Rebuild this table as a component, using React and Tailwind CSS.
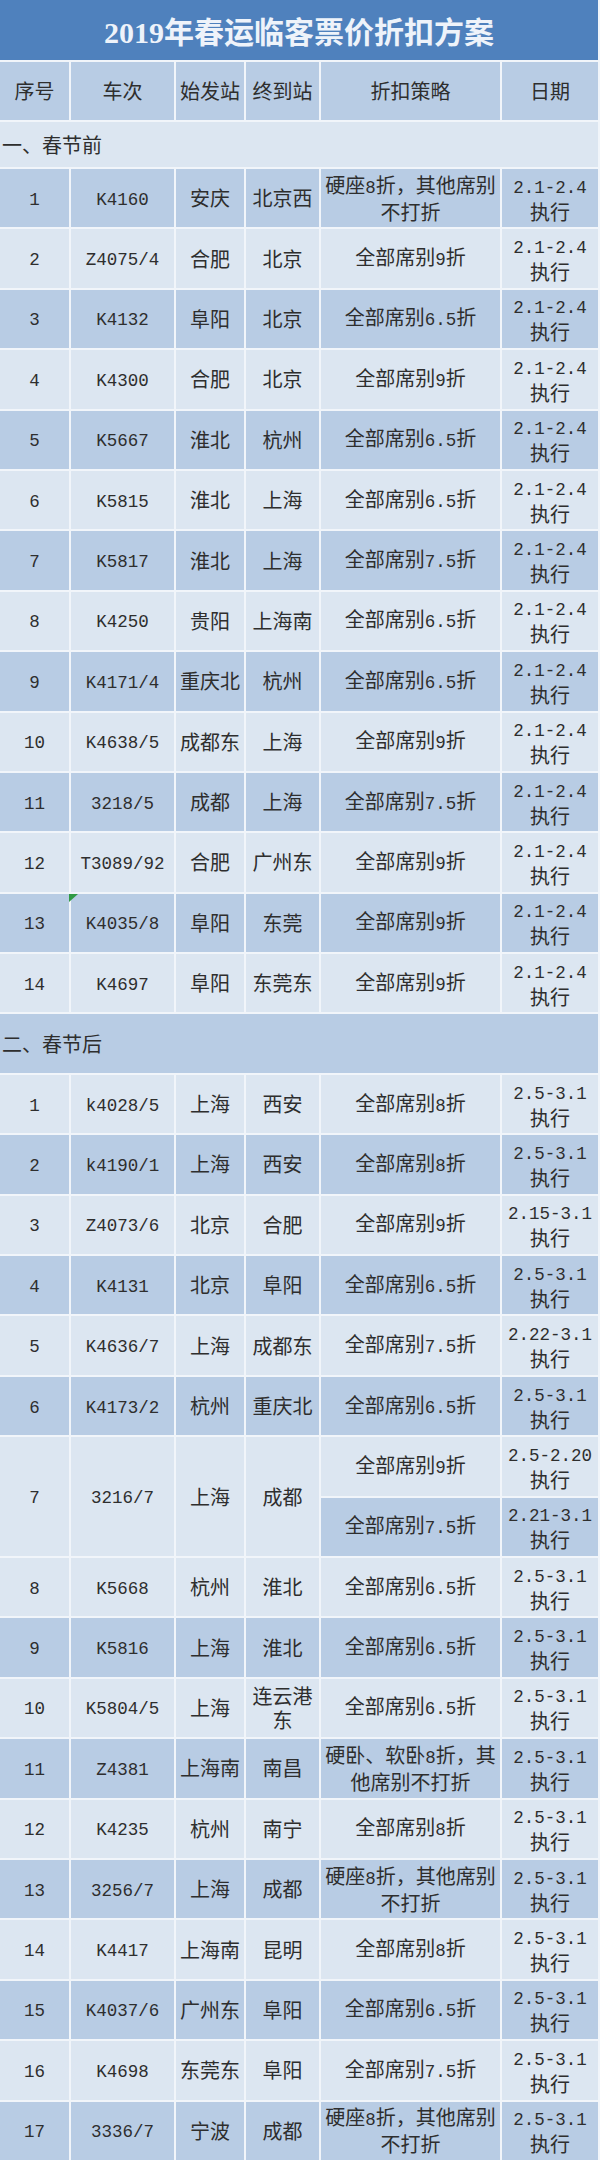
import React from "react";

const DARK = "bg-[#b8cce4]";
const LIGHT = "bg-[#dce6f1]";

function Txt({ s }) {
  const lines = s.split("|");
  return (
    <div className="flex flex-col items-center">
      {lines.map((line, i) => (
        <div key={i} className="whitespace-nowrap">
          {line
            .split(/([\x00-\x7f]+)/)
            .filter(Boolean)
            .map((p, j) =>
              /^[\x00-\x7f]+$/.test(p) ? (
                <span key={j} className="font-['Liberation_Mono',monospace] text-[17.5px]">
                  {p}
                </span>
              ) : (
                <span key={j}>{p}</span>
              )
            )}
        </div>
      ))}
    </div>
  );
}

function Cell({ bg, s, className = "", children }) {
  return (
    <div
      className={`${bg} relative flex items-center justify-center text-center text-[20px] leading-[24px] text-[#2e2e2e] ${className}`}
    >
      {s !== undefined ? <Txt s={s} /> : null}
      {children}
    </div>
  );
}

const sec1 = [
  ["1", "K4160", "安庆", "北京西", "硬座8折，其他席别|不打折"],
  ["2", "Z4075/4", "合肥", "北京", "全部席别9折"],
  ["3", "K4132", "阜阳", "北京", "全部席别6.5折"],
  ["4", "K4300", "合肥", "北京", "全部席别9折"],
  ["5", "K5667", "淮北", "杭州", "全部席别6.5折"],
  ["6", "K5815", "淮北", "上海", "全部席别6.5折"],
  ["7", "K5817", "淮北", "上海", "全部席别7.5折"],
  ["8", "K4250", "贵阳", "上海南", "全部席别6.5折"],
  ["9", "K4171/4", "重庆北", "杭州", "全部席别6.5折"],
  ["10", "K4638/5", "成都东", "上海", "全部席别9折"],
  ["11", "3218/5", "成都", "上海", "全部席别7.5折"],
  ["12", "T3089/92", "合肥", "广州东", "全部席别9折"],
  ["13", "K4035/8", "阜阳", "东莞", "全部席别9折"],
  ["14", "K4697", "阜阳", "东莞东", "全部席别9折"],
];

const sec2 = [
  ["1", "k4028/5", "上海", "西安", "全部席别8折", "2.5-3.1|执行"],
  ["2", "k4190/1", "上海", "西安", "全部席别8折", "2.5-3.1|执行"],
  ["3", "Z4073/6", "北京", "合肥", "全部席别9折", "2.15-3.1|执行"],
  ["4", "K4131", "北京", "阜阳", "全部席别6.5折", "2.5-3.1|执行"],
  ["5", "K4636/7", "上海", "成都东", "全部席别7.5折", "2.22-3.1|执行"],
  ["6", "K4173/2", "杭州", "重庆北", "全部席别6.5折", "2.5-3.1|执行"],
  ["7", "3216/7", "上海", "成都", null, null],
  ["8", "K5668", "杭州", "淮北", "全部席别6.5折", "2.5-3.1|执行"],
  ["9", "K5816", "上海", "淮北", "全部席别6.5折", "2.5-3.1|执行"],
  ["10", "K5804/5", "上海", "连云港|东", "全部席别6.5折", "2.5-3.1|执行"],
  ["11", "Z4381", "上海南", "南昌", "硬卧、软卧8折，其|他席别不打折", "2.5-3.1|执行"],
  ["12", "K4235", "杭州", "南宁", "全部席别8折", "2.5-3.1|执行"],
  ["13", "3256/7", "上海", "成都", "硬座8折，其他席别|不打折", "2.5-3.1|执行"],
  ["14", "K4417", "上海南", "昆明", "全部席别8折", "2.5-3.1|执行"],
  ["15", "K4037/6", "广州东", "阜阳", "全部席别6.5折", "2.5-3.1|执行"],
  ["16", "K4698", "东莞东", "阜阳", "全部席别7.5折", "2.5-3.1|执行"],
  ["17", "3336/7", "宁波", "成都", "硬座8折，其他席别|不打折", "2.5-3.1|执行"],
];

export default function App() {
  const cells = [];

  // header
  ["序号", "车次", "始发站", "终到站", "折扣策略", "日期"].forEach((h, i) =>
    cells.push(<Cell key={"h" + i} bg={DARK} s={h} className="h-[58px]" />)
  );

  cells.push(
    <Cell key="s1" bg={LIGHT} className="col-span-6 h-[45px] !justify-start pl-[2px]">
      <Txt s="一、春节前" />
    </Cell>
  );

  sec1.forEach((r, idx) => {
    const bg = idx % 2 === 0 ? DARK : LIGHT;
    r.forEach((c, j) =>
      cells.push(
        <Cell key={`a${idx}-${j}`} bg={bg} s={c} className="h-[58.4px]">
          {idx === 12 && j === 1 ? (
            <svg
              className="absolute left-[-2px] top-0"
              width="9"
              height="8"
              viewBox="0 0 9 8"
            >
              <polygon points="0,0 9,0 0,8" fill="#2f9a44" />
            </svg>
          ) : null}
        </Cell>
      )
    );
    cells.push(<Cell key={`a${idx}-d`} bg={bg} s="2.1-2.4|执行" className="h-[58.4px]" />);
  });

  cells.push(
    <Cell key="s2" bg={DARK} className="col-span-6 h-[58.4px] !justify-start pl-[2px]">
      <Txt s="二、春节后" />
    </Cell>
  );

  let unit = 0;
  sec2.forEach((r, idx) => {
    const bg = unit % 2 === 0 ? LIGHT : DARK;
    if (r[4] === null) {
      for (let j = 0; j < 4; j++) {
        cells.push(<Cell key={`b${idx}-${j}`} bg={bg} s={r[j]} className="row-span-2" />);
      }
      cells.push(<Cell key={`b${idx}-4a`} bg={LIGHT} s="全部席别9折" className="h-[58.4px]" />);
      cells.push(<Cell key={`b${idx}-5a`} bg={LIGHT} s="2.5-2.20|执行" className="h-[58.4px]" />);
      cells.push(<Cell key={`b${idx}-4b`} bg={DARK} s="全部席别7.5折" className="h-[58.4px]" />);
      cells.push(<Cell key={`b${idx}-5b`} bg={DARK} s="2.21-3.1|执行" className="h-[58.4px]" />);
      unit += 2;
    } else {
      r.forEach((c, j) =>
        cells.push(<Cell key={`b${idx}-${j}`} bg={bg} s={c} className="h-[58.4px]" />)
      );
      unit += 1;
    }
  });

  return (
    <div className="w-[600px] bg-white font-['Noto_Sans_CJK_SC',sans-serif]">
      <div className="grid grid-cols-[69px_103px_68px_73px_179px_96px] gap-[2px] bg-[#f1f5fa] pr-[2px]">
        <div className="col-span-6 flex h-[60px] items-center justify-center bg-[#4f81bd] pt-[4px] font-['Liberation_Serif','Noto_Sans_CJK_SC',serif] text-[30px] font-bold text-[#eef3fa]">
          2019年春运临客票价折扣方案
        </div>
        {cells}
      </div>
    </div>
  );
}
